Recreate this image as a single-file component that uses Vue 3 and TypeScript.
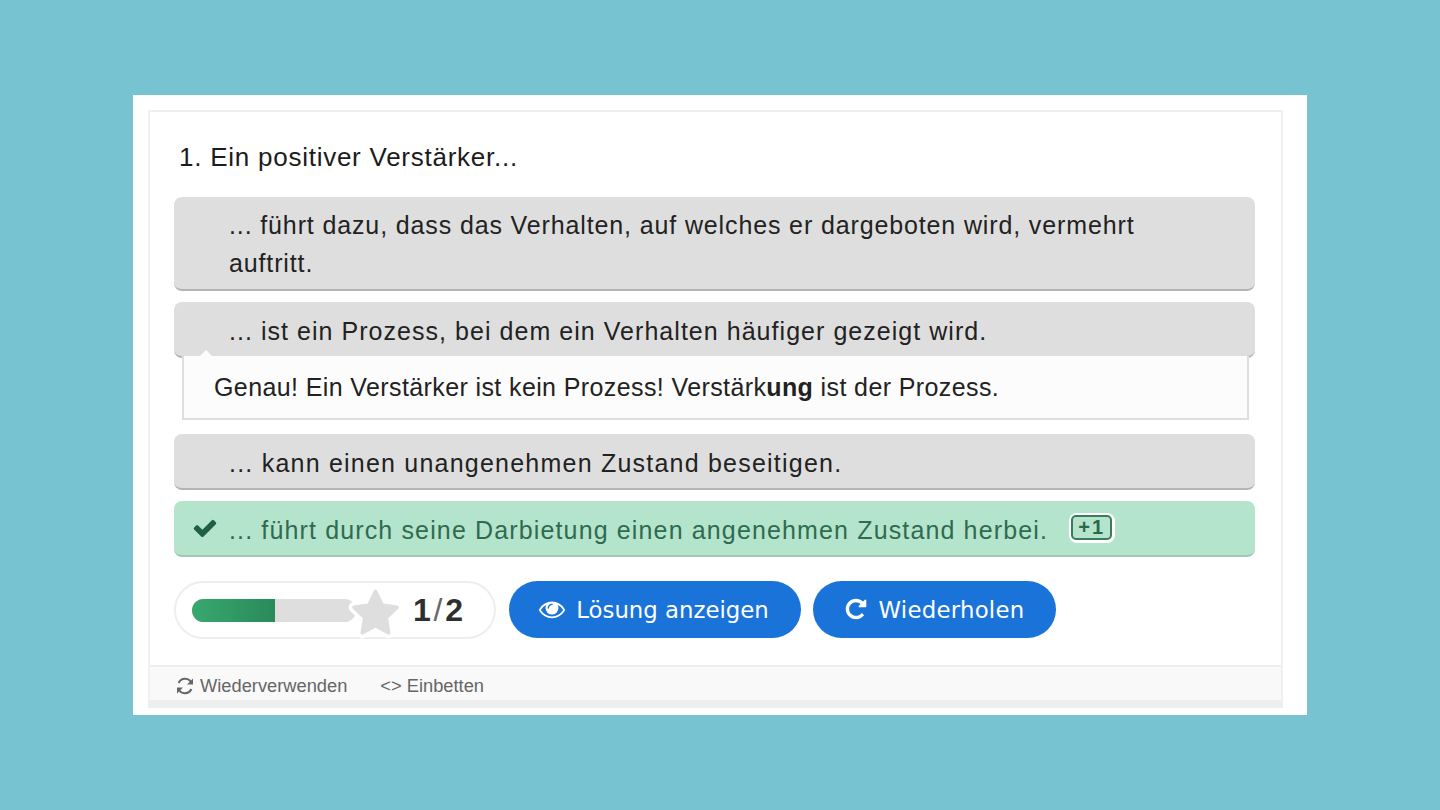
<script setup lang="ts">
const check = 'M1671 566q0 40-28 68l-724 724-136 136q-28 28-68 28t-68-28l-136-136-362-362q-28-28-28-68t28-68l136-136q28-28 68-28t68 28l294 295 656-657q28-28 68-28t68 28l136 136q28 28 28 68z'
const eye = 'M1664 960q-152-236-381-353 61 104 61 225 0 185-131.500 316.500t-316.500 131.500-316.500-131.500-131.500-316.500q0-121 61-225-229 117-381 353 133 205 333.500 326.500t434.500 121.500 434.500-121.500 333.500-326.500zm-720-384q0-20-14-34t-34-14q-125 0-214.500 89.500t-89.500 214.500q0 20 14 34t34 14 34-14 14-34q0-86 61-147t147-61q20 0 34-14t14-34zm848 384q0 34-20 69-140 230-376.500 368.500t-499.500 138.500-499.500-139-376.500-368q-20-35-20-69t20-69q140-229 376.500-368t499.500-139 499.500 139 376.500 368q20 35 20 69z'
const repeat = 'M1664 256v448q0 26-19 45t-45 19h-448q-42 0-59-40-17-39 14-69l138-138q-148-137-349-137-104 0-198.500 40.500t-163.500 109.500-109.500 163.500-40.500 198.500 40.500 198.500 109.500 163.500 163.500 109.500 198.500 40.500q119 0 225-52t179-147q7-10 23-12 15 0 25 9l137 138q9 8 9.500 20.500t-7.500 22.500q-109 132-264 204.500t-327 72.500q-156 0-298-61t-245-164-164-245-61-298 61-298 164-245 245-164 298-61q147 0 284.500 55.500t244.500 156.500l130-129q29-31 70-14 39 17 39 59z'
const starPath = 'M30 6 L37.500 21.500 L54.500 24 L42.200 36 L45 53 L30 45 L15 53 L17.800 36 L5.500 24 L22.500 21.500 Z'
</script>

<template>
  <div class="page">
    <div class="sheet">
      <div class="widget">
        <main class="content">
          <p class="question">1. Ein positiver Verstärker...</p>
          <ul class="answers">
            <li class="answer first">... führt dazu, dass das Verhalten, auf welches er dargeboten wird, vermehrt auftritt.</li>
            <li class="with-tip">
              <div class="answer second">... ist ein Prozess, bei dem ein Verhalten häufiger gezeigt wird.</div>
              <div class="tip">Genau! Ein Verstärker ist kein Prozess! Verstärk<b>ung</b> ist der Prozess.</div>
            </li>
            <li class="answer third">... kann einen unangenehmen Zustand beseitigen.</li>
            <li class="answer correct">
              <svg class="check" viewBox="0 0 1792 1792"><path :d="check" /></svg>
              ... führt durch seine Darbietung einen angenehmen Zustand herbei.
              <span class="badge"><span class="badge-inner">+1</span></span>
            </li>
          </ul>
          <div class="controls">
            <div class="score">
              <div class="bar"><div class="fill"></div></div>
              <svg class="star" viewBox="0 0 60 60">
                <path class="star-halo" :d="starPath" />
                <path class="star-body" :d="starPath" />
              </svg>
              <span class="count">1<i>/</i>2</span>
            </div>
            <button class="btn show">
              <svg class="btn-icon" viewBox="0 0 1792 1792"><path :d="eye" /></svg>
              <span>Lösung anzeigen</span>
            </button>
            <button class="btn retry">
              <svg class="btn-icon small" viewBox="0 0 1792 1792"><path :d="repeat" /></svg>
              <span>Wiederholen</span>
            </button>
          </div>
        </main>
        <footer class="footer">
          <span class="link">
            <svg class="foot-icon" viewBox="0 0 20 20">
              <path class="arc" d="M16.600 7.500 A7 7 0 0 0 3.600 7" />
              <path class="arc" d="M3.400 12.500 A7 7 0 0 0 16.400 13" />
              <path class="tip-mark" d="M18 2.500 V8.500 H12 Z" />
              <path class="tip-mark" d="M2 17.500 V11.500 H8 Z" />
            </svg>
            Wiederverwenden
          </span>
          <span class="link">&lt;&gt; Einbetten</span>
        </footer>
      </div>
    </div>
  </div>
</template>

<style>
body {
  margin: 0;
  background: #78c3d1;
}
</style>

<style scoped>
.page {
  height: 810px;
  display: flex;
  align-items: center;
  justify-content: center;
  font-family: "Liberation Sans", Arial, sans-serif;
}
.sheet {
  width: 1174px;
  height: 620px;
  box-sizing: border-box;
  background: #fff;
  padding: 15px 24px 7px 15px;
}
.widget {
  height: 100%;
  box-sizing: border-box;
  border: 2px solid #f0f0f0;
  border-bottom-width: 8px;
  border-bottom-color: #eeeeee;
  display: flex;
  flex-direction: column;
}
.content {
  flex: 1;
  padding: 0 26px 0 24px;
}
.question {
  margin: 0;
  padding: 30px 0 25px 5px;
  font-size: 26px;
  line-height: 30px;
  letter-spacing: 0.75px;
  color: #1c1c1c;
}
.answers {
  list-style: none;
  margin: 0;
  padding: 0;
  display: flex;
  flex-direction: column;
  gap: 11px;
}
.answer {
  box-sizing: border-box;
  background: #dedede;
  border-radius: 8px;
  border-bottom: 2px solid #b4b4b4;
  padding: 10px 100px 6px 55px;
  font-size: 25px;
  line-height: 38px;
  color: #222;
  position: relative;
}
.first {
  padding-top: 9px;
  padding-bottom: 7px;
  letter-spacing: 0.87px;
}
.second {
  letter-spacing: 1.04px;
}
.third {
  letter-spacing: 1.22px;
}
.with-tip {
  display: flex;
  flex-direction: column;
  margin-bottom: 3px;
}
.tip {
  position: relative;
  margin: -2px 6px 0 8px;
  box-sizing: border-box;
  height: 64px;
  background: #fcfcfc;
  border: 2px solid #dedede;
  border-top: 0;
  padding: 0 0 0 30px;
  font-size: 25px;
  line-height: 62px;
  letter-spacing: 0.39px;
  color: #222;
}
.tip::before {
  content: "";
  position: absolute;
  left: 15px;
  top: -6px;
  border: 7px solid transparent;
  border-top: 0;
  border-bottom-color: #fcfcfc;
}
.correct {
  background: #b5e4cc;
  border-bottom-color: #a2c8b4;
  color: #2f6b50;
  letter-spacing: 1.14px;
}
.check {
  position: absolute;
  left: 18px;
  top: 14px;
  width: 26px;
  height: 26px;
  fill: #1f6044;
}
.badge {
  display: inline-block;
  vertical-align: 5px;
  margin-left: 12.500px;
  padding: 2.500px;
  background: #fff;
  border-radius: 8px;
  line-height: 0;
}
.badge-inner {
  display: inline-block;
  box-sizing: border-box;
  width: 41px;
  height: 25px;
  border: 2px solid #3d7a5c;
  border-radius: 5px;
  background: #b5e4cc;
  color: #2a6a4c;
  font-size: 20px;
  font-weight: 700;
  line-height: 21px;
  text-align: center;
  letter-spacing: 2px;
}
.controls {
  display: flex;
  align-items: center;
  gap: 13px;
  margin-top: 24px;
}
.score {
  width: 322px;
  height: 58px;
  box-sizing: border-box;
  border: 2px solid #eee;
  border-radius: 29px;
  display: flex;
  align-items: center;
  padding-left: 16px;
}
.bar {
  width: 164px;
  height: 23px;
  flex: none;
  border-radius: 12px;
  background: #dedede;
  overflow: hidden;
}
.fill {
  width: 83px;
  height: 100%;
  background: linear-gradient(90deg, #38a86f, #2a8a5a);
}
.star {
  width: 53px;
  height: 53px;
  flex: none;
  margin-left: -7px;
  margin-top: 5px;
  overflow: visible;
}
.star-halo {
  fill: #fff;
  stroke: #fff;
  stroke-width: 12px;
  stroke-linejoin: round;
}
.star-body {
  fill: #dedede;
  stroke: #dedede;
  stroke-width: 4px;
  stroke-linejoin: round;
}
.count {
  margin-left: 11px;
  font-size: 32px;
  font-weight: 700;
  color: #2f2f2f;
  letter-spacing: 2.800px;
}
.count i {
  font-style: normal;
  font-weight: 400;
  color: #666;
}
.btn {
  height: 57px;
  border: 0;
  border-radius: 29px;
  background: #1a73d9;
  color: #fff;
  font-family: "DejaVu Sans", sans-serif;
  font-size: 22.800px;
  display: flex;
  align-items: center;
  justify-content: center;
  gap: 11px;
  padding: 0;
  margin-top: -2px;
}
.btn span {
  padding-top: 2px;
}
.show {
  width: 292px;
  padding-right: 2px;
}
.retry {
  width: 243px;
  margin-left: -1px;
  padding-right: 1px;
  letter-spacing: 0.25px;
}
.btn-icon {
  width: 26px;
  height: 26px;
  fill: #fff;
}
.btn-icon.small {
  width: 24px;
  height: 24px;
}
.footer {
  height: 35px;
  box-sizing: border-box;
  border-top: 2px solid #eee;
  background: #f9f9f9;
  padding: 5px 0 0 25px;
  display: flex;
  align-items: center;
  gap: 33px;
  font-size: 18.300px;
  color: #666;
}
.link {
  display: flex;
  align-items: center;
  gap: 5px;
}
.foot-icon {
  width: 20px;
  height: 20px;
}
.arc {
  fill: none;
  stroke: #666;
  stroke-width: 2px;
}
.tip-mark {
  fill: #666;
}
</style>
